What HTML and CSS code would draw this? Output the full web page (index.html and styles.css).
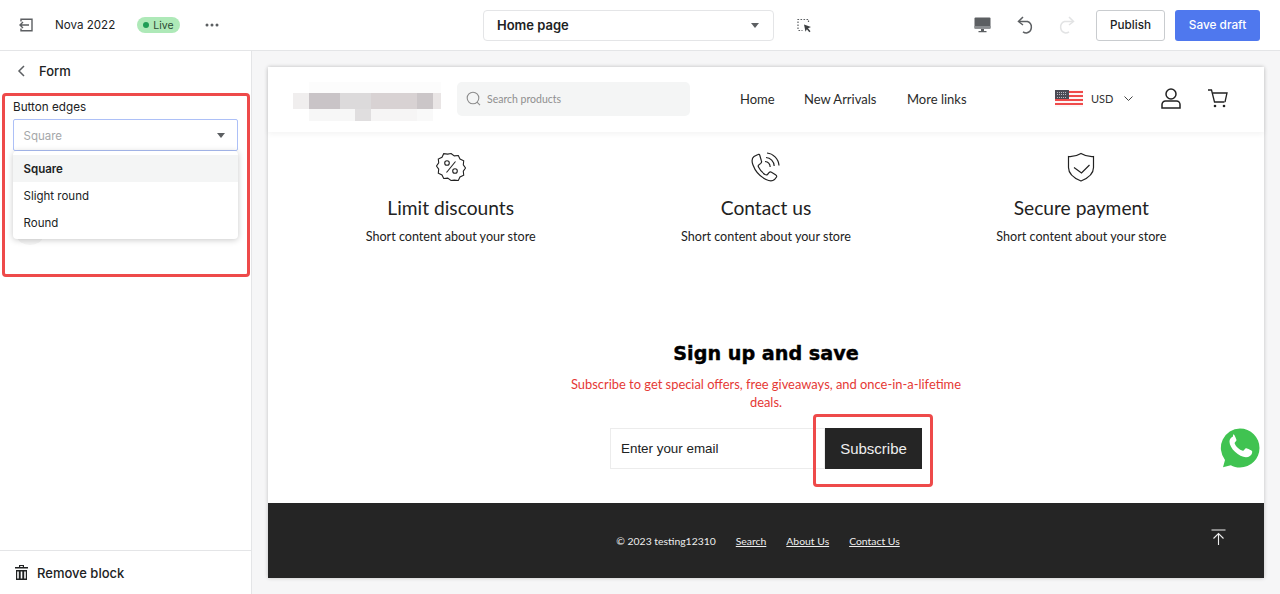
FILE: index.html
```html
<!DOCTYPE html>
<html lang="en">
<head>
<meta charset="utf-8">
<title>Theme editor</title>
<link rel="stylesheet" href="styles.css">
</head>
<body>
<div class="app">
  <header class="topbar">
    <svg class="ic-exit" width="16" height="16" viewBox="0 0 16 16" fill="none" stroke="#5c5f62" stroke-width="1.4"><path d="M3 4.500V2.200h11v11.600H3v-2.300"/><path d="M11 8H2M5 5L2 8l3 3"/></svg>
    <span class="store-name">Nova 2022</span>
    <span class="live"><i class="live-dot"></i>Live</span>
    <svg class="ic-dots" width="14" height="4" viewBox="0 0 14 4" fill="#5c5f62"><circle cx="2" cy="2" r="1.500"/><circle cx="7" cy="2" r="1.500"/><circle cx="12" cy="2" r="1.500"/></svg>
    <div class="page-select"><span>Home page</span><i class="caret"></i></div>
    <svg class="ic-select" width="15" height="15" viewBox="0 0 15 15" fill="none"><path d="M1 11V1.500h10.500V5" stroke="#5c5f62" stroke-width="1.200" stroke-dasharray="1.600 1.400"/><path d="M1.500 12.500h4" stroke="#5c5f62" stroke-width="1.200" stroke-dasharray="1.600 1.400"/><path d="M7 6.500l7 2.500-3 1.200 2.500 3-1.200 1-2.400-3-1.400 2.500z" fill="#3c3f42"/></svg>
    <svg class="ic-monitor" width="17" height="16" viewBox="0 0 17 16"><rect x="0.500" y="0.500" width="16" height="11" rx="1" fill="#5c5f62"/><rect x="0.500" y="9" width="16" height="2.800" fill="#8a8d90"/><path d="M7 12h3v2H7zM4.500 14h8v1.200h-8z" fill="#5c5f62"/></svg>
    <svg class="ic-undo" width="18" height="18" viewBox="0 0 18 18" fill="none" stroke="#5c5f62" stroke-width="1.500"><path d="M2 5.500h8.500a6 6 0 0 1-1 11.500 6 6 0 0 1-3.500-1.200"/><path d="M6 1L1.500 5.500 6 9"/></svg>
    <svg class="ic-redo" width="18" height="18" viewBox="0 0 18 18" fill="none" stroke="#e2e3e4" stroke-width="1.500"><path d="M16 5.500H7.500a6 6 0 0 0 1 11.500 6 6 0 0 0 3.500-1.200"/><path d="M12 1l4.500 4.500L12 9"/></svg>
    <button class="btn-publish">Publish</button>
    <button class="btn-save">Save draft</button>
  </header>

  <div class="main">
    <aside class="sidebar">
      <div class="side-head">
        <svg width="8" height="12" viewBox="0 0 8 12" fill="none" stroke="#5c5f62" stroke-width="1.500"><path d="M7 1L2 6l5 5"/></svg>
        <span>Form</span>
      </div>
      <div class="field">
        <label class="field-label">Button edges</label>
        <div class="select"><span>Square</span><i class="caret"></i></div>
      </div>
      <div class="side-fill"></div>
      <div class="remove">
        <svg width="13" height="15" viewBox="0 0 13 15" fill="#202223"><path d="M4 0h5v2h4v1.500H0V2h4zM5.200 1v1h2.600V1z"/><path d="M1 5h11v10H1zM2.200 6.500v7h1.600v-7zM5.700 6.500v7h1.600v-7zM9.200 6.500v7h1.600v-7z"/></svg>
        <span>Remove block</span>
      </div>

      <div class="ghost-circle"></div>
      <ul class="menu">
        <li class="menu-active">Square</li>
        <li>Slight round</li>
        <li>Round</li>
      </ul>
      <div class="mark mark-side"></div>
    </aside>

    <main class="preview">
      <div class="store">
        <div class="store-head">
          <svg class="logo" width="148" height="39" viewBox="0 0 148 39" shape-rendering="crispEdges">
            <rect x="16" width="132" height="11" fill="#fcfcfc"/>
            <rect y="11" width="16" height="16" fill="#f0eeee"/>
            <rect x="16" y="11" width="31" height="16" fill="#c9c4c7"/>
            <rect x="47" y="11" width="31" height="16" fill="#dcdadb"/>
            <rect x="78" y="11" width="46" height="16" fill="#d8d2d3"/>
            <rect x="124" y="11" width="16" height="16" fill="#cbc6c8"/>
            <rect x="140" y="11" width="8" height="16" fill="#e9e5e5"/>
            <rect x="16" y="27" width="46" height="12" fill="#f7f7f7"/>
            <rect x="62" y="27" width="16" height="12" fill="#e0dedf"/>
            <rect x="78" y="27" width="46" height="12" fill="#f6f5f5"/>
            <rect x="124" y="27" width="16" height="12" fill="#f9f9f9"/>
          </svg>
          <div class="search">
            <svg width="15" height="15" viewBox="0 0 15 15" fill="none" stroke="#8d8d8d" stroke-width="1.100"><circle cx="7" cy="7" r="5.800"/><path d="M11 11.200l3 3"/></svg>
            <span>Search products</span>
          </div>
          <nav class="nav"><a>Home</a><a>New Arrivals</a><a>More links</a></nav>
          <svg class="flag" width="28" height="17" viewBox="0 0 28 17" shape-rendering="crispEdges">
            <rect width="28" height="17" fill="#fdf5f5"/>
            <path d="M0 1h28v2H0zM0 5h28v2H0zM0 9h28v2H0zM0 13h28v2H0z" fill="#ef4a4a"/>
            <rect width="14" height="9" fill="#4b4b55"/>
            <path d="M2 2h10M2 4.500h10M2 7h10" stroke="#b9b9c0" stroke-dasharray="1 1"/>
          </svg>
          <span class="currency">USD</span>
          <svg class="chev" width="9" height="5" viewBox="0 0 9 5" fill="none" stroke="#444" stroke-width="1"><path d="M.5.500l4 4 4-4"/></svg>
          <svg class="user" width="20" height="21" viewBox="0 0 20 21" fill="none" stroke="#222" stroke-width="1.500"><circle cx="10" cy="6" r="5"/><path d="M1 20v-3.500a3.500 3.500 0 0 1 3.500-3.500h11a3.500 3.500 0 0 1 3.500 3.500V20z"/></svg>
          <svg class="cart" width="20" height="19" viewBox="0 0 20 19" fill="none" stroke="#222" stroke-width="1.300"><path d="M0 1h3.500l3 12h10"/><path d="M4.500 4H19l-2 9"/><circle cx="7" cy="17" r="1.300" fill="#222" stroke="none"/><circle cx="16" cy="17" r="1.300" fill="#222" stroke="none"/></svg>
        </div>

        <section class="features">
          <div class="feature">
            <svg width="30" height="30" viewBox="0 0 30 30" fill="none" stroke="#222" stroke-width="1.100"><path d="M15 1.500l3.300 2.400 4-.4 1.700 3.600 3.700 1.700-.4 4 2.200 3.200-2.200 3.200.4 4-3.700 1.700-1.700 3.600-4-.4L15 28.500l-3.300-2.400-4 .4-1.700-3.600-3.700-1.700.4-4L.5 14l2.200-3.200-.4-3.800 3.700-1.700 1.700-3.600 4 .4z"/><path d="M19.500 9.500l-9 11"/><circle cx="11" cy="11" r="2.300"/><circle cx="19" cy="19" r="2.300"/></svg>
            <h3>Limit discounts</h3>
            <p>Short content about your store</p>
          </div>
          <div class="feature">
            <svg width="30" height="30" viewBox="0 0 30 30" fill="none" stroke="#222" stroke-width="1.200"><path d="M7 2.500L3 4.500C1 6 .5 9 2 13c2 5.500 7 11.500 13 14.500 3.500 1.700 6.500 1.800 8.500 0l2-2.500c.5-1-.2-1.800-1-2.300l-4-2.500c-1-.5-1.800-.3-2.500.5l-1.500 1.800c-.7.600-1.500.5-2.500 0-2.500-1.500-5-4.500-6.500-7.500-.5-1-.4-1.700.5-2.300l1.800-1.300c.8-.7 1-1.500.6-2.500L8.700 3c-.4-.7-1-.9-1.700-.5z"/><path d="M14 9.500c2.800.2 5 2.500 5.200 5.500M15 5.500c4.500.2 8 3.800 8.200 8.500M16 1c6 .5 11.500 5.500 12 12.500"/></svg>
            <h3>Contact us</h3>
            <p>Short content about your store</p>
          </div>
          <div class="feature">
            <svg width="30" height="30" viewBox="0 0 30 30" fill="none" stroke="#222" stroke-width="1.200"><path d="M15 1.500c3.500 2.200 8 3.300 12.500 3v11c0 6-5 10.500-12.500 13.500C7.500 26 2.500 21.500 2.500 15.500v-11c4.500.3 9-.8 12.500-3z"/><path d="M8 15.500l7.500 5.500 8-8"/></svg>
            <h3>Secure payment</h3>
            <p>Short content about your store</p>
          </div>
        </section>

        <section class="signup">
          <h2>Sign up and save</h2>
          <p>Subscribe to get special offers, free giveaways, and once-in-a-lifetime deals.</p>
          <form class="signup-form">
            <div class="email">Enter your email</div>
            <button type="button" class="subscribe">Subscribe</button>
            <div class="mark mark-sub"></div>
          </form>
        </section>

        <footer class="store-foot">
          <span>© 2023 testing12310</span>
          <a>Search</a><a>About Us</a><a>Contact Us</a>
          <svg class="to-top" width="15" height="16" viewBox="0 0 15 16" fill="none" stroke="#eee" stroke-width="1.100"><path d="M.5 1h14M7.500 16V4.500M2.500 9.500l5-5 5 5"/></svg>
        </footer>
      </div>
      <svg class="wa" width="40" height="40" viewBox="0 0 40 40"><path d="M20 .5a19.500 19.500 0 0 1 0 39c-3.500 0-6.500-.9-9.200-2.300L3 39.300l2-7.300A19.500 19.500 0 0 1 20 .5z" fill="#40c351"/><path d="M13 8.500c-1 .2-3.500 2-3.500 5.200 0 3.300 2.300 7 5.500 10 3.500 3.200 7.500 5.500 11 5.500 3 0 5.500-2 6-4 .2-1 .3-2 0-2.300-.4-.5-4.500-2.500-5.500-2.700-.8-.1-1.200.3-2 1.300-.6.800-1.100 1.400-1.800 1.200-1.500-.5-3.500-1.500-5-3-1.400-1.300-2.500-3-3-4.300-.2-.6.300-1 1-1.800.7-.8.900-1.200.7-2-.3-1-1.700-4.500-2.400-4.900-.4-.2-1-.2-1-.2z" fill="#fff"/></svg>
    </main>
  </div>
</div>
</body>
</html>
```
FILE: styles.css
```css
* { box-sizing: border-box; }
html, body { margin: 0; height: 594px; overflow: hidden; }
body { font-family: Inter, "Liberation Sans", sans-serif; color: #202223; background: #f6f6f7; }
svg { display: block; flex: none; }
button { font-family: inherit; cursor: pointer; }

.app { display: flex; flex-direction: column; height: 594px; }

.topbar { height: 51px; flex: none; display: flex; align-items: center; background: #fff; border-bottom: 1px solid #e4e5e7; }
.ic-exit { margin-left: 18px; }
.store-name { margin-left: 21px; font-size: 11.600px; width: 82px; }
.live { width: 43px; height: 16px; border-radius: 8px; background: #aee9b8; display: flex; align-items: center; justify-content: center; gap: 4px; font-size: 10.500px; color: #2c4a34; }
.live-dot { width: 6px; height: 6px; border-radius: 50%; background: #1f9d55; }
.ic-dots { margin-left: 25px; }
.page-select { margin-left: 264px; width: 291px; height: 31px; border: 1px solid #e4e5e7; border-radius: 4px; display: flex; align-items: center; justify-content: space-between; padding: 0 14px 0 13px; font-size: 13px; font-weight: 600; }
.caret { width: 0; height: 0; border-left: 4.500px solid transparent; border-right: 4.500px solid transparent; border-top: 5px solid #5c5f62; }
.ic-select { margin-left: 23px; }
.ic-monitor { margin-left: 162px; }
.ic-undo { margin-left: 26px; }
.ic-redo { margin-left: 22px; }
.btn-publish { margin-left: 21px; width: 69px; height: 31px; background: #fff; border: 1px solid #c9cccf; border-radius: 3px; font-size: 11.700px; font-weight: 500; color: #202223; padding: 0; }
.btn-save { margin-left: 10px; width: 85px; height: 31px; background: #4f78ee; border: 0; border-radius: 3px; font-size: 11.800px; font-weight: 500; color: #fff; padding: 0; }

.main { flex: 1; display: flex; min-height: 0; }

.sidebar { position: relative; width: 252px; flex: none; background: #fff; border-right: 1px solid #e4e5e7; display: flex; flex-direction: column; }
.side-head { height: 40px; display: flex; align-items: center; padding-left: 17px; gap: 14px; font-size: 13px; font-weight: 500; }
.field { padding: 9px 13px 0; }
.field-label { display: block; font-size: 11.700px; line-height: 15px; margin-bottom: 4px; }
.select { width: 225px; height: 32px; border: 1.500px solid #adc0f7; border-radius: 2px; display: flex; align-items: center; justify-content: space-between; padding: 1px 12px 0 9.500px; font-size: 11.500px; color: #a5a7a9; }
.side-fill { flex: 1; }
.remove { height: 44px; border-top: 1px solid #e4e5e7; display: flex; align-items: center; gap: 9px; padding: 0 0 0 15px; font-size: 13px; font-weight: 500; }

.ghost-circle { position: absolute; left: 17px; top: 176px; width: 26px; height: 18px; border-radius: 50%; background: #f5f5f5; }
.menu { position: absolute; left: 13px; top: 100px; width: 225px; height: 88px; margin: 0; padding: 4px 0 0; list-style: none; background: #fff; border-radius: 4px; box-shadow: 0 1px 6px rgba(0,0,0,.22); font-size: 11.500px; }
.menu li { height: 27px; line-height: 28px; padding-left: 10.500px; }
.menu .menu-active { background: #f4f5f5; font-weight: 600; }

.mark { position: absolute; border: 3px solid #ee4a4a; border-radius: 4px; pointer-events: none; }
.mark-side { left: 2px; top: 42px; width: 248px; height: 184px; }
.mark-sub { left: 203px; top: -14px; width: 120px; height: 73px; }

.preview { position: relative; flex: 1; padding: 16px; min-width: 0; }
.store { width: 996px; height: 511px; background: #fff; box-shadow: 0 0 4px rgba(0,0,0,.22); display: flex; flex-direction: column; font-family: Lato, sans-serif; }

.store-head { height: 65px; flex: none; display: flex; align-items: center; padding-bottom: 2px; box-shadow: 0 2px 6px rgba(0,0,0,.05); }
.logo { margin-left: 25px; margin-top: 6px; }
.search { margin-left: 16px; width: 233px; height: 34px; border-radius: 5px; background: #f4f5f5; display: flex; align-items: center; gap: 6px; padding-left: 9px; font-size: 10.500px; color: #8f8f8f; }
.nav { margin-left: 50px; display: flex; font-size: 13px; color: #2a2a2a; }
.nav a:nth-child(1) { width: 64px; }
.nav a:nth-child(2) { width: 103px; }
.nav a:nth-child(3) { width: 148px; }
.currency { margin-left: 8px; font-size: 11px; color: #333; width: 33px; }
.user { margin-left: 28px; }
.cart { margin-left: 27px; }

.features { display: flex; padding: 20px 25px 0; height: 180px; flex: none; }
.feature { flex: 1; display: flex; flex-direction: column; align-items: center; color: #222; }
.feature h3 { margin: 13px 0 0; font-size: 19.200px; line-height: 26px; font-weight: 400; }
.feature p { margin: 8px 0 0; font-size: 12.600px; line-height: 16px; }

.signup { flex: 1; display: flex; flex-direction: column; align-items: center; padding-top: 29px; }
.signup h2 { margin: 0; font-family: "DejaVu Sans", sans-serif; font-size: 19.200px; line-height: 26px; font-weight: 800; color: #000; -webkit-text-stroke: .4px #000; }
.signup p { margin: 8px 0 0; width: 400px; text-align: center; font-size: 12.900px; line-height: 18px; color: #e53935; }
.signup-form { position: relative; display: flex; margin-top: 17px; width: 312px; height: 41px; }
.email { width: 215px; border: 1px solid #ececec; font-family: "Liberation Sans", sans-serif; font-size: 13.400px; line-height: 39px; padding-left: 10px; }
.subscribe { width: 97px; height: 41px; background: #252525; color: #eee; border: 0; border-radius: 0; padding: 0; font-family: "Liberation Sans", sans-serif; font-size: 15px; }

.store-foot { position: relative; height: 75px; flex: none; background: #252525; color: #eee; display: flex; align-items: center; justify-content: center; gap: 20px; font-size: 10.400px; padding-right: 16px; }
.store-foot a { text-decoration: underline; }
.to-top { position: absolute; left: 943px; top: 26px; }

.wa { position: absolute; left: 968px; top: 377px; }
```
